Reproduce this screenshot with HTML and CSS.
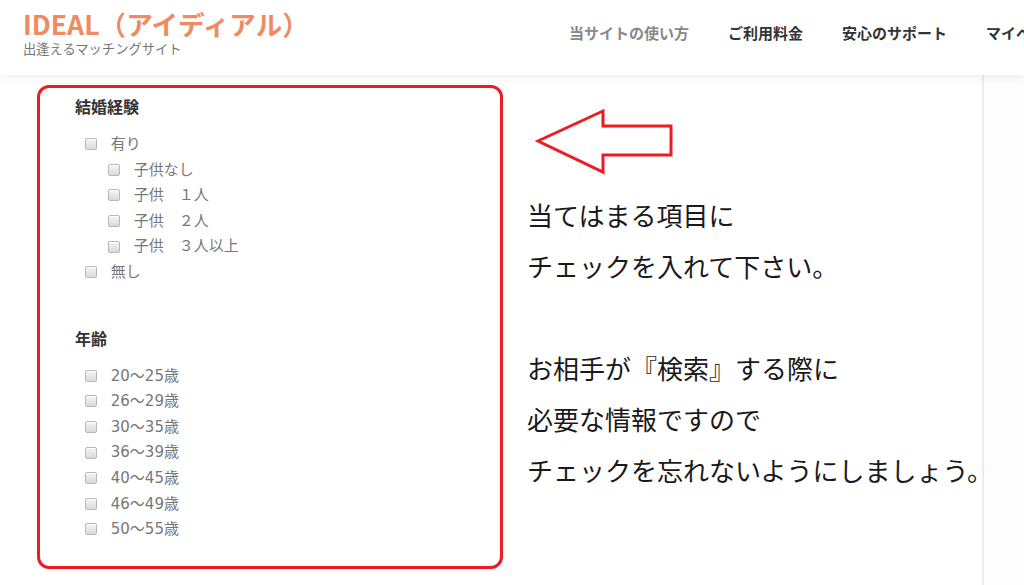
FILE: index.html
```html
<!DOCTYPE html>
<html lang="ja">
<head>
	<meta charset="UTF-8">
	<title>IDEAL（アイディアル）</title>
	<link rel="stylesheet" href="styles.css">
</head>
<body>
	<header class="site-head">
		<div class="logo">
			<h1 class="logo-title">IDEAL（アイディアル）</h1>
			<p class="logo-sub">出逢えるマッチングサイト</p>
		</div>
		<nav class="gnav">
			<a class="gnav-item gnav-item--light" href="#">当サイトの使い方</a>
			<a class="gnav-item" href="#">ご利用料金</a>
			<a class="gnav-item" href="#">安心のサポート</a>
			<a class="gnav-item" href="#">マイページ</a>
		</nav>
	</header>

	<div class="wrap">
		<main class="content">
			<form class="check-box">
				<h4 class="check-title">結婚経験</h4>
				<ul class="check-list">
					<li><label><input type="checkbox"> 有り</label>
						<ul class="check-list check-list--sub">
							<li><label><input type="checkbox"> 子供なし</label></li>
							<li><label><input type="checkbox"> 子供　１人</label></li>
							<li><label><input type="checkbox"> 子供　２人</label></li>
							<li><label><input type="checkbox"> 子供　３人以上</label></li>
						</ul>
					</li>
					<li><label><input type="checkbox"> 無し</label></li>
				</ul>

				<h4 class="check-title check-title--gap">年齢</h4>
				<ul class="check-list">
					<li><label><input type="checkbox"> 20〜25歳</label></li>
					<li><label><input type="checkbox"> 26〜29歳</label></li>
					<li><label><input type="checkbox"> 30〜35歳</label></li>
					<li><label><input type="checkbox"> 36〜39歳</label></li>
					<li><label><input type="checkbox"> 40〜45歳</label></li>
					<li><label><input type="checkbox"> 46〜49歳</label></li>
					<li><label><input type="checkbox"> 50〜55歳</label></li>
				</ul>
			</form>

			<div class="note">
				<svg class="arrow" width="140" height="68" viewBox="0 0 140 68">
					<polygon points="3,33 68,3 68,18 136,18 136,47 68,47 68,64" fill="#fff" stroke="#ec1c24" stroke-width="3" stroke-linejoin="miter"/>
				</svg>
				<p class="note-text">
					当てはまる項目に<br>
					チェックを入れて下さい。<br>
					<br>
					お相手が『検索』する際に<br>
					必要な情報ですので<br>
					チェックを忘れないようにしましょう。
				</p>
			</div>
		</main>
		<aside class="side"></aside>
	</div>
</body>
</html>
```

FILE: styles.css
```css
*{
	margin: 0;
	padding: 0;
	box-sizing: border-box;
}
body{
	width: 1024px;
	height: 585px;
	overflow: hidden;
	background: #fff;
	font-family: "Noto Sans CJK JP", "Noto Sans", sans-serif;
	color: #333;
}
a{text-decoration: none;}
ul{list-style: none;}

/* header */
.site-head{
	position: relative;
	z-index: 2;
	display: flex;
	height: 75px;
	padding-left: 23px;
	background: #fff;
	box-shadow: 0 3px 8px rgba(0,0,0,0.06);
	overflow: hidden;
}
.logo{
	width: 546px;
	flex-shrink: 0;
	padding-top: 6px;
}
.logo-title{
	font-size: 26.6px;
	line-height: 36px;
	font-weight: bold;
	color: #ef8a62;
}
.logo-sub{
	margin-top: -1px;
	font-size: 13.3px;
	line-height: 16px;
	color: #777;
}
.gnav{
	display: flex;
	gap: 39px;
	flex-shrink: 0;
	white-space: nowrap;
	padding-top: 22px;
}
.gnav-item{
	font-size: 15px;
	line-height: 22px;
	font-weight: bold;
	color: #333;
}
.gnav-item--light{color: #888;}

/* body */
.wrap{
	display: flex;
	height: 510px;
	background: #fdfdfd;
}
.content{
	display: flex;
	width: 984px;
	padding: 10px 0 0 37px;
	border-right: 2px solid #ebebeb;
	background: #fff;
}
.side{flex: 1;}

.check-box{
	flex-shrink: 0;
	width: 466px;
	height: 484px;
	padding: 8px 0 0 35px;
	border: 3px solid #ec1c24;
	border-radius: 12px;
}
.check-title{
	font-size: 16px;
	line-height: 20px;
	font-weight: bold;
	color: #333;
	margin-bottom: 16px;
}
.check-title--gap{margin-top: 42px;}
.check-list{
	padding-left: 10px;
	font-family: "DejaVu Sans", "Noto Sans CJK JP", sans-serif;
	font-size: 15px;
	line-height: 25.6px;
	color: #777;
}
.check-list--sub{padding-left: 23px;}
.check-list label{
	display: flex;
	align-items: center;
	white-space: pre;
}
.check-list input{
	appearance: none;
	-webkit-appearance: none;
	width: 12px;
	height: 12px;
	margin: -1px 9px 0 0;
	border: 1px solid #b8b8b8;
	border-radius: 2px;
	background: linear-gradient(#f6f6f6, #d9d9d9);
	box-shadow: inset 0 1px 0 #fff;
}

.note{
	flex-shrink: 0;
	padding: 23px 0 0 32px;
}
.arrow{display: block;}
.note-text{
	margin: 13px 0 0 -8px;
	font-size: 26px;
	line-height: 51px;
	color: #1a1a1a;
	white-space: nowrap;
}
```
